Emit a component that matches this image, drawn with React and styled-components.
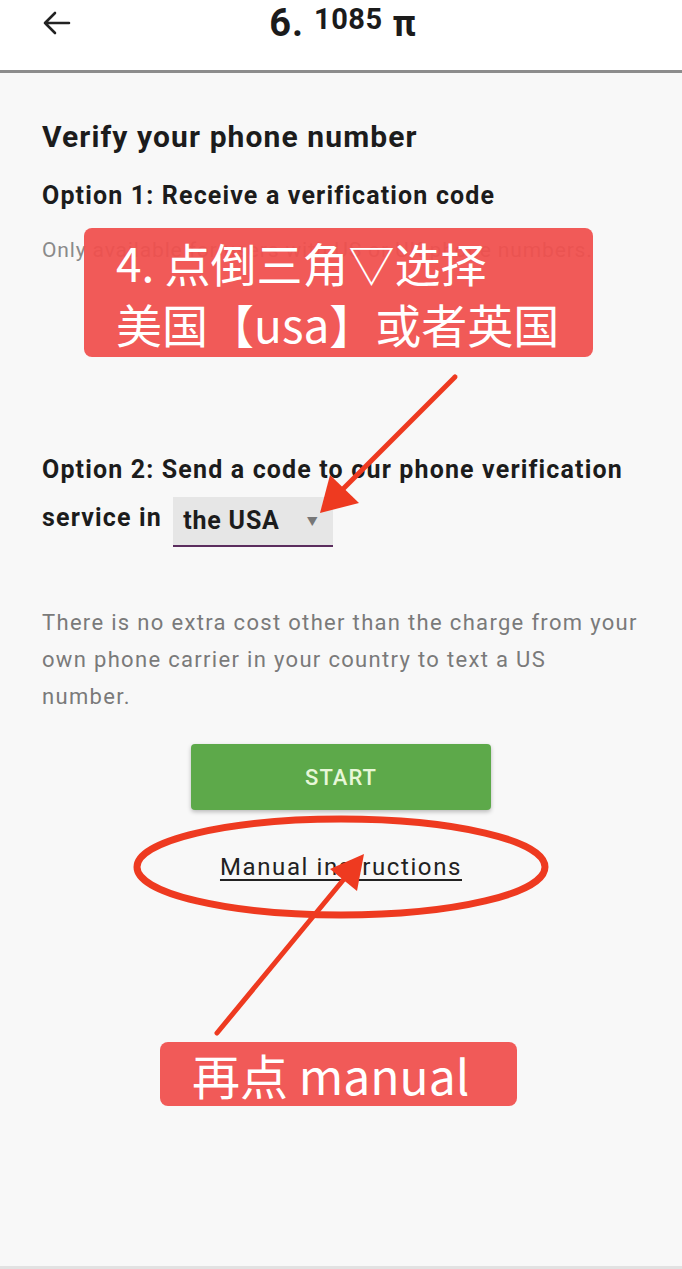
import React from 'react';
import styled, {createGlobalStyle} from 'styled-components';

const GlobalStyle = createGlobalStyle`
    body{
        margin: 0;
        background: #f8f8f8;
        font-family: Roboto, "Noto Sans", "Noto Sans CJK SC", sans-serif;
    }
`;

const App = () => {
    return(
        <Page>
            <GlobalStyle/>
            <Header>
                <Back>
                    <svg width="30" height="26" viewBox="0 0 30 26" fill="none" stroke="#222" strokeWidth="2.6" strokeLinecap="round" strokeLinejoin="round">
                        <path d="M27 13H3M13 3L3 13l10 10"/>
                    </svg>
                </Back>
                <Balance>6.<sup>1085</sup><span className="pi">π</span></Balance>
            </Header>
            <Content>
                <Title>Verify your phone number</Title>
                <Option>Option 1: Receive a verification code</Option>
                <Note>Only available for users with US or UK phone numbers.</Note>
                <Option2>
                    Option 2: Send a code to our phone verification<br/>
                    service in <Select>the USA <span className="caret">▼</span></Select>
                </Option2>
                <Info>
                    There is no extra cost other than the charge from your<br/>
                    own phone carrier in your country to text a US<br/>
                    number.
                </Info>
                <Actions>
                    <StartButton>START</StartButton>
                    <ManualLink>Manual instructions</ManualLink>
                </Actions>
            </Content>
            <Marks width="682" height="1269" viewBox="0 0 682 1269">
                <ellipse cx="341" cy="867" rx="204" ry="48" fill="none" stroke="#ee3a20" strokeWidth="7"/>
                <line x1="455" y1="377" x2="340" y2="492" stroke="#ee3a20" strokeWidth="5" strokeLinecap="round"/>
                <polygon points="320,513 330,475 359,503" fill="#ee3a20"/>
                <line x1="217" y1="1033" x2="349" y2="873" stroke="#ee3a20" strokeWidth="5" strokeLinecap="round"/>
                <polygon points="364,854 357,891 330,869" fill="#ee3a20"/>
            </Marks>
            <Callout1>4. 点倒三角▽选择<br/>美国【usa】或者英国</Callout1>
            <Callout2>再点 manual</Callout2>
        </Page>
    );
};

const Page = styled.div`
    position: relative;
    width: 682px;
    height: 1269px;
    overflow: hidden;
    background: #f8f8f8;
    border-bottom: 3px solid #e2e2e2;
    box-sizing: border-box;
`;

const Header = styled.div`
    height: 70px;
    background: #fff;
    border-bottom: 3px solid #8c8c8c;
    display: flex;
    align-items: flex-start;
    justify-content: center;
    position: relative;
`;

const Back = styled.div`
    position: absolute;
    left: 42px;
    top: 10px;
`;

const Balance = styled.div`
    padding-top: 4px;
    font-size: 38px;
    line-height: 38px;
    font-weight: 700;
    color: #1b1b1b;
    letter-spacing: 1px;
    margin-left: 4px;
    sup{
        font-size: 29px;
        font-weight: 700;
        vertical-align: 0;
        position: relative;
        top: -7px;
        margin-left: 10px;
        letter-spacing: 0.5px;
    }
    .pi{
        font-size: 36px;
        margin-left: 10px;
    }
`;

const Content = styled.div`
    padding: 0 30px 0 42px;
    color: #1c1c1c;
`;

const Title = styled.div`
    margin-top: 46px;
    font-size: 30px;
    line-height: 36px;
    font-weight: 700;
    letter-spacing: 1.1px;
`;

const Option = styled.div`
    margin-top: 26px;
    font-size: 25px;
    line-height: 30px;
    font-weight: 700;
    letter-spacing: 1.15px;
`;

const Note = styled.div`
    margin-top: 24px;
    font-size: 21px;
    line-height: 30px;
    color: #8a8a8a;
    letter-spacing: 0.85px;
    white-space: nowrap;
`;

const Option2 = styled.div`
    margin-top: 181px;
    font-size: 25px;
    line-height: 48px;
    font-weight: 700;
    letter-spacing: 1.15px;
    white-space: nowrap;
`;

const Select = styled.span`
    display: inline-block;
    background: #e6e6e6;
    height: 48px;
    margin-top: 3px;
    padding: 0 14px 0 10px;
    margin-left: 4px;
    border-bottom: 2px solid #5b2d5e;
    vertical-align: top;
    letter-spacing: 0.8px;
    .caret{
        font-size: 11px;
        color: #777;
        margin-left: 20px;
        vertical-align: 3px;
    }
`;

const Info = styled.div`
    margin-top: 57px;
    font-size: 22px;
    line-height: 37px;
    color: #7a7a7a;
    letter-spacing: 1.32px;
    white-space: nowrap;
`;

const Actions = styled.div`
    display: flex;
    flex-direction: column;
    align-items: center;
    margin-top: 29px;
    padding-right: 12px;
`;

const StartButton = styled.div`
    width: 300px;
    height: 66px;
    border-radius: 4px;
    background: #5da94a;
    box-shadow: 0 2px 4px rgba(0,0,0,0.25);
    color: #e7f7d8;
    font-size: 22px;
    font-weight: 500;
    letter-spacing: 1px;
    display: flex;
    align-items: center;
    justify-content: center;
`;

const ManualLink = styled.div`
    margin-top: 42px;
    font-size: 24px;
    line-height: 30px;
    color: #222;
    letter-spacing: 1.6px;
    text-decoration: underline;
    text-underline-offset: 4px;
`;

const Marks = styled.svg`
    position: absolute;
    left: 0;
    top: 0;
    pointer-events: none;
`;

const Callout = styled.div`
    position: absolute;
    background: rgba(240, 80, 78, 0.94);
    color: #fff;
    border-radius: 8px;
    font-family: "Noto Sans CJK SC", "Noto Sans", sans-serif;
    box-sizing: border-box;
    white-space: nowrap;
`;

const Callout1 = styled(Callout)`
    left: 84px;
    top: 228px;
    width: 509px;
    height: 129px;
    padding: 4px 0 0 32px;
    font-size: 46px;
    line-height: 61px;
`;

const Callout2 = styled(Callout)`
    left: 160px;
    top: 1042px;
    width: 357px;
    height: 64px;
    padding-left: 32px;
    font-size: 48px;
    line-height: 64px;
`;

export default App;
